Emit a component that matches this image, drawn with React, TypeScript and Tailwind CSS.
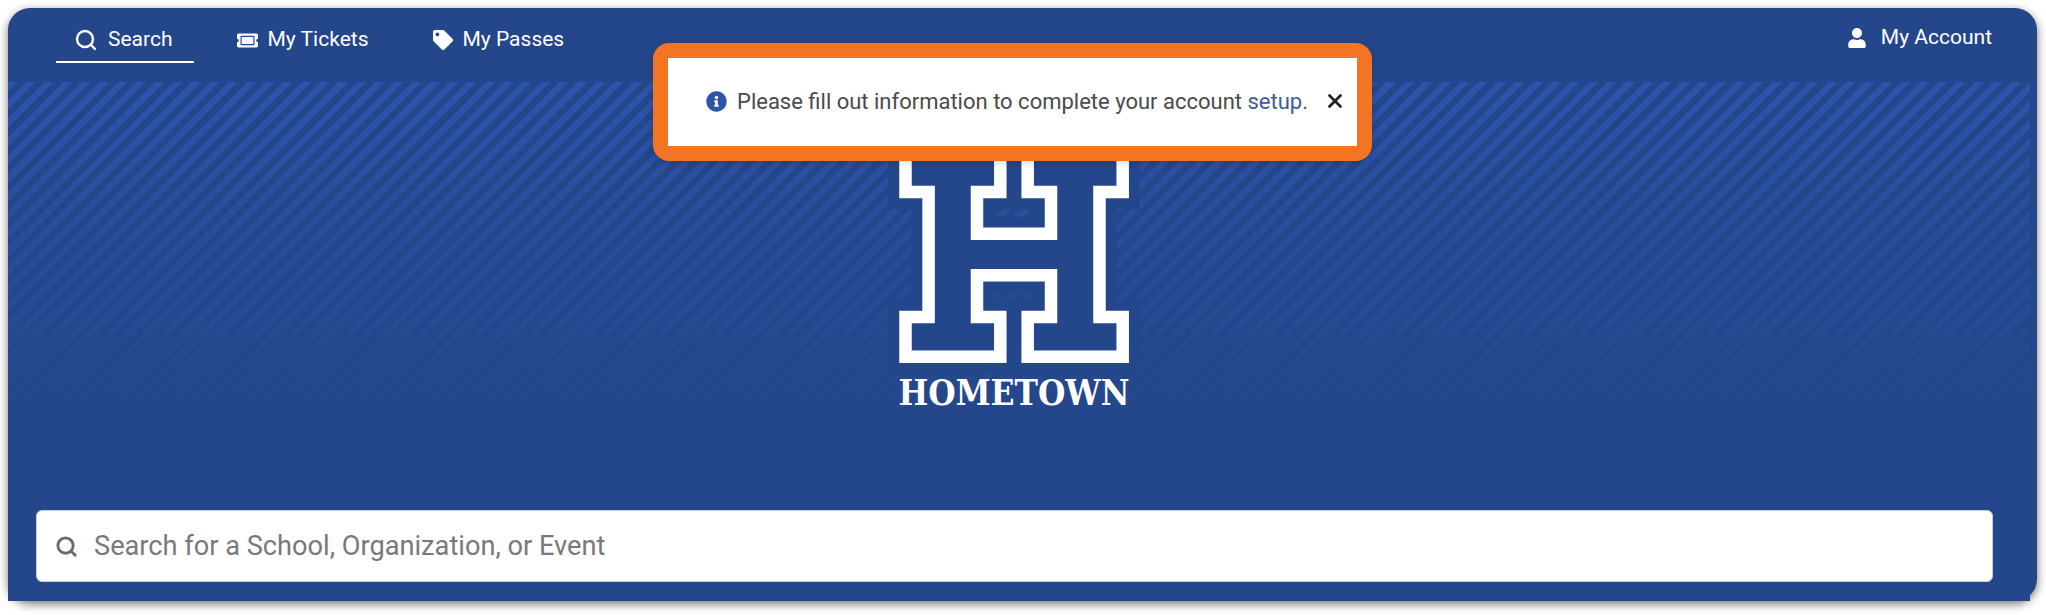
import React from "react";
import { Search, X } from "lucide-react";
import { FaInfoCircle, FaTag, FaTicketAlt, FaUser } from "react-icons/fa";

const HOutline =
  "M928.6 317 H905.5 V356.7 H1000.3 V317 H977 V275.3 H1051 V317 H1027.7 V356.7 H1122.7 V317 H1099.5 V192 H1122.7 V152.3 H1027.7 V192 H1051 V233.7 H977 V192 H1000.3 V152.3 H905.5 V192 H928.6 Z";

const NavItem: React.FC<{
  icon: React.ReactNode;
  label: string;
  active?: boolean;
}> = ({ icon, label, active }) => (
  <div
    className={`flex items-center gap-[10px] h-[44px] px-[21px] border-b-2 ${
      active ? "border-white" : "border-transparent"
    }`}
  >
    {icon}
    <span className="text-[21px]">{label}</span>
  </div>
);

const App: React.FC = () => {
  return (
    <div className="w-[2046px] h-[615px] bg-white pt-2 pl-2 [font-family:Roboto,sans-serif]">
      <div className="relative flex flex-col w-[2029px] h-[593px] rounded-[22px] bg-[#24468a] shadow-[0_3px_10px_rgba(0,0,0,0.55)]">
        {/* top nav */}
        <div className="flex items-start justify-between h-[74px] pt-[11px] pl-[48px] pr-[45px] text-white">
          <div className="flex items-center gap-[22px]">
            <NavItem
              active
              icon={
                <Search size={24} strokeWidth={2.4} className="-ml-[3px]" />
              }
              label="Search"
            />
            <NavItem icon={<FaTicketAlt size={21} />} label="My Tickets" />
            <NavItem icon={<FaTag size={20} />} label="My Passes" />
          </div>
          <div className="flex items-center gap-[14px] h-[38px]">
            <FaUser size={20} />
            <span className="text-[21px]">My Account</span>
          </div>
        </div>

        {/* hero */}
        <div className="relative flex flex-col flex-1 items-center pr-[17px] rounded-b-[22px]">
          <div className="absolute inset-y-0 left-0 right-[7px] bg-[image:linear-gradient(to_bottom,rgba(36,70,138,0)_0,#24468a_66%),repeating-linear-gradient(135deg,#2c54aa_0,#2c54aa_6.5px,#24468a_6.5px,#24468a_13px)]" />

          <svg
            viewBox="880 130 268 250"
            className="relative mt-[48px] w-[268px] h-[250px] shrink-0"
          >
            <path
              d={HOutline}
              fill="#24468a"
              stroke="#24468a"
              strokeWidth={34.5}
              strokeLinejoin="miter"
            />
            <path
              d={HOutline}
              fill="#24468a"
              stroke="#ffffff"
              strokeWidth={12.5}
              strokeLinejoin="miter"
            />
          </svg>
          <div className="relative h-[30px] text-white text-[35px] leading-[26px] font-bold [font-stretch:condensed] [font-family:'DejaVu_Serif',serif]">
            HOMETOWN
          </div>

          {/* search box */}
          <div className="relative mt-auto mb-[19px] mr-[-1px] flex items-center w-[1957px] h-[72px] rounded-[6px] bg-white pl-[18px] pr-[20px] gap-[16px] border border-[#c9ced8]">
            <Search size={23} strokeWidth={3} className="text-[#6c6c6c]" />
            <input
              className="flex-1 text-[27.2px] text-[#333] outline-none placeholder:text-[#77797d]"
              placeholder="Search for a School, Organization, or Event"
            />
          </div>
        </div>

        {/* account alert */}
        <div className="absolute left-[645px] top-[35px] w-[719px] h-[118px] rounded-[16px] bg-[#f37524] p-[15px] shadow-[0_2px_8px_rgba(0,0,0,0.15)]">
          <div className="flex items-center h-full bg-white pl-[38px] pb-[2px] text-[#4a4a4a] text-[22px]">
            <FaInfoCircle size={21} className="text-[#2c54aa]" />
            <span className="ml-[10px]">
              Please fill out information to complete your account{" "}
              <span className="text-[#3f5a9a]">setup.</span>
            </span>
            <X size={22} strokeWidth={3} className="ml-[16px] text-[#222]" />
          </div>
        </div>
      </div>
    </div>
  );
};

export default App;
